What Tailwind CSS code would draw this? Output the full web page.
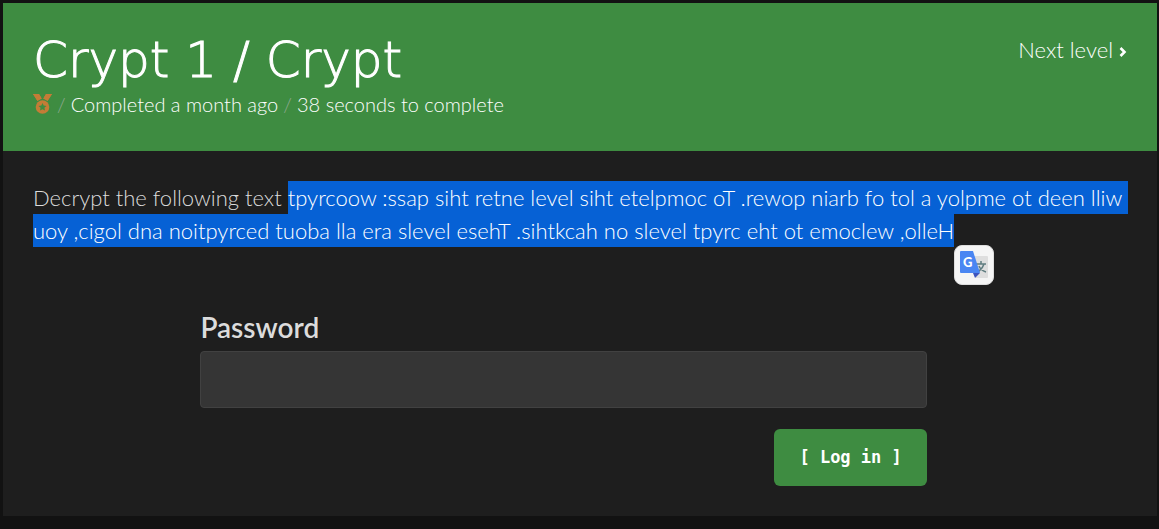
<!DOCTYPE html>
<html lang="en">
<head>
<meta charset="utf-8">
<meta name="viewport" content="width=device-width, initial-scale=1">
<title>Crypt 1 / Crypt</title>
<script src="https://cdn.jsdelivr.net/npm/@tailwindcss/browser@4"></script>
</head>
<body class="min-h-screen bg-[#121212] pt-[3px] pr-0.5 pb-3 pl-[3px] font-['Lato',sans-serif] font-light text-[#dcdcdc]">
<main class="bg-[#1e1e1e] pb-[30px]">
  <header class="flex items-start justify-between bg-[#3e8c41] px-[30px] pt-7 pb-[33px] text-white">
    <div>
      <h1 class="font-['DejaVu_Sans_Light','DejaVu_Sans',sans-serif] text-[50px] leading-[59px] font-extralight whitespace-nowrap [-webkit-text-stroke:1px_white]">Crypt 1 / Crypt</h1>
      <p class="flex items-center gap-[5px] text-[20px] leading-7 whitespace-nowrap">
        <svg class="h-5 w-[19px]" viewBox="0 0 19 20" role="img" aria-label="Bronze medal">
          <path fill="#c47c36" d="M0 0h6l2.700 4.500L4.500 7zM19 0h-6l-2.700 4.500L14.500 7z"/>
          <circle cx="9.500" cy="13" r="8" fill="#3e8c41"/>
          <path fill="#c47c36" d="M0 0h6l2.700 4.500L4.500 7zM19 0h-6l-2.700 4.500L14.500 7z"/>
          <circle cx="9.500" cy="13" r="6.800" fill="#c47c36"/>
          <path fill="#3e8c41" d="M9.500 9l1.200 2.600 2.800.3-2.100 1.900.6 2.800-2.500-1.400L7 16.600l.6-2.800-2.100-1.900 2.800-.3z"/>
        </svg>
        <span class="text-[#8fa890]">/</span>
        <span>Completed a month ago</span>
        <span class="text-[#8fa890]">/</span>
        <span>38 seconds to complete</span>
      </p>
    </div>
    <a href="#next" class="flex items-center gap-[6px] pt-px text-[22px] leading-9 whitespace-nowrap">Next level
      <svg class="mt-1 h-[10px] w-2" viewBox="0 0 8 10" fill="none" stroke="currentColor" stroke-width="2.600" aria-hidden="true"><path d="M1.500 1l4 4-4 4"/></svg>
    </a>
  </header>
  <section class="px-[30px] pt-[30px]">
    <p class="-mr-2 text-[22px] leading-[33px] whitespace-break-spaces">Decrypt the following text <span class="relative inline"><mark class="bg-[#0661d5] py-[3px] text-white">tpyrcoow :ssap siht retne level siht etelpmoc oT .rewop niarb fo tol a yolpme ot deen lliw uoy ,cigol dna noitpyrced tuoba lla era slevel esehT .sihtkcah no slevel tpyrc eht ot emoclew ,olleH</mark><button type="button" aria-label="Translate selection" class="absolute top-full left-full mt-px flex size-10 items-center justify-center rounded-lg border border-[#dddddd] bg-[#f5f5f5] whitespace-normal"><svg class="size-7 shrink-0" viewBox="0 0 28 28" aria-hidden="true">
        <path fill="#dedede" d="M13 5h14q1 0 1 1v20q0 1-1 1H16z"/>
        <path fill="none" stroke="#607d80" stroke-width="1.500" d="M16 13h10M21 10v3M24 13c-1 4-4 6-6 8M19 15c1 3 4 5 7 6"/>
        <path fill="#3d54bd" d="M13 22h7l-5 5z"/>
        <path fill="#4a86f2" d="M1 0h12l7 22H1q-1 0-1-1V1q0-1 1-1z"/>
        <text x="3" y="16" fill="#fff" font-family="Lato, sans-serif" font-size="13" font-weight="900">G</text>
      </svg></button></span></p>
    <form class="mt-16 ml-[15.3%] w-[66.4%]">
      <label for="password" class="block text-[28px] leading-8 font-semibold">Password</label>
      <input id="password" type="password" class="mt-2 block h-[57px] w-full rounded border border-[#414141] bg-[#353535] px-4 outline-none">
      <button type="submit" class="mt-[21px] ml-auto block h-[57px] rounded-md bg-[#3e8c41] px-[25px] font-['DejaVu_Sans_Mono',monospace] text-[17px] font-bold text-white">[ Log in ]</button>
    </form>
  </section>
</main>
</body>
</html>
